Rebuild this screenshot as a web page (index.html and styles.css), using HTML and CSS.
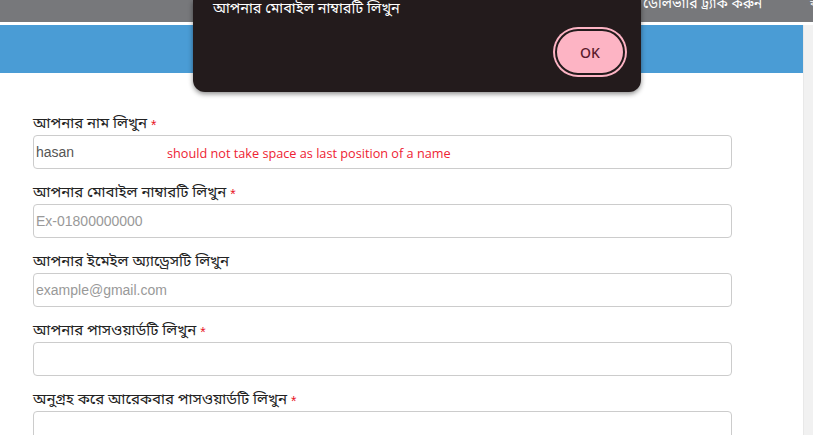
FILE: index.html
```html
<!DOCTYPE html>
<html lang="bn">
<head>
<meta charset="utf-8">
<link rel="stylesheet" href="styles.css">
</head>
<body>
<header class="topbar">
  <span class="nav-link">ডেলিভারি ট্র্যাক করুন</span>
  <span class="nav-link nav-last">ব</span>
</header>
<div class="page">
  <main class="main">
    <div class="banner"></div>
    <form class="form">
      <div class="field">
        <label class="label">আপনার নাম লিখুন <span class="req">*</span></label>
        <div class="input-wrap">
          <input class="input" type="text" value="hasan">
          <span class="error">should not take space as last position of a name</span>
        </div>
      </div>
      <div class="field">
        <label class="label">আপনার মোবাইল নাম্বারটি লিখুন <span class="req">*</span></label>
        <input class="input" type="text" placeholder="Ex-01800000000">
      </div>
      <div class="field">
        <label class="label">আপনার ইমেইল অ্যাড্রেসটি লিখুন</label>
        <input class="input" type="text" placeholder="example@gmail.com">
      </div>
      <div class="field">
        <label class="label">আপনার পাসওয়ার্ডটি লিখুন <span class="req">*</span></label>
        <input class="input" type="password">
      </div>
      <div class="field">
        <label class="label">অনুগ্রহ করে আরেকবার পাসওয়ার্ডটি লিখুন <span class="req">*</span></label>
        <input class="input" type="password">
      </div>
    </form>
  </main>
  <div class="scrollbar"></div>
</div>
<div class="dialog">
  <p class="dialog-text">আপনার মোবাইল নাম্বারটি লিখুন</p>
  <div class="dialog-actions">
    <button class="ok-btn" type="button">OK</button>
  </div>
</div>
</body>
</html>
```

FILE: styles.css
```css
* { box-sizing: border-box; }
html, body { margin: 0; padding: 0; }
body {
  width: 813px;
  height: 435px;
  overflow: hidden;
  background: #fff;
  font-family: "Noto Sans Bengali", "Lohit Bengali", "Noto Serif Bengali", "FreeSerif", "Noto Sans", sans-serif;
}
.topbar {
  height: 22px;
  background: #77787b;
  display: flex;
  align-items: flex-start;
  padding-left: 643px;
  border-bottom: 3px solid #fff;
  box-sizing: content-box;
  overflow: hidden;
}
.nav-link {
  color: #fff;
  font-size: 14px;
  line-height: 14px;
  margin-top: -2px;
  white-space: nowrap;
}
.nav-last { margin-left: 48px; font-size: 10px; }
.page {
  display: flex;
  height: 410px;
  overflow: hidden;
}
.main {
  flex: 1;
  background: #fff;
}
.scrollbar {
  width: 10px;
  background: #f1f1f1;
  border-left: 1px solid #e8e8e8;
}
.banner {
  height: 48px;
  background: #4a9cd5;
}
.form {
  padding: 27px 0 0 33px;
  width: 732px;
}
.field {
  display: flex;
  flex-direction: column;
}
.label {
  font-size: 15px;
  line-height: 17px;
  color: #222;
  height: 35px;
  padding-bottom: 2px;
  display: flex;
  align-items: flex-end;
  gap: 4px;
}
.req { color: #e8131f; font-family: "Liberation Sans", sans-serif; font-size: 14px; line-height: 15px; }
.input-wrap { position: relative; }
.input {
  width: 699px;
  height: 34px;
  border: 1px solid #ccc;
  border-radius: 4px;
  padding: 0 2px;
  font-family: "Liberation Sans", Arial, sans-serif;
  font-size: 14px;
  color: #555;
  background: #fff;
  display: block;
}
.input::placeholder { color: #999; }
.error {
  position: absolute;
  left: 134px;
  top: 10px;
  font-family: "Open Sans", sans-serif;
  font-size: 12.7px;
  line-height: 16px;
  color: #ee2233;
  white-space: nowrap;
}
.dialog {
  position: absolute;
  left: 193px;
  top: 0;
  width: 448px;
  height: 92px;
  background: #231b1c;
  border-radius: 0 0 12px 12px;
  box-shadow: 0 2px 5px rgba(0,0,0,0.45);
  padding: 0 16px 17px 20px;
  display: flex;
  flex-direction: column;
  justify-content: space-between;
}
.dialog-text {
  margin: 1px 0 0 0;
  color: #fff;
  font-size: 14.5px;
  line-height: 18px;
}
.dialog-actions {
  display: flex;
  justify-content: flex-end;
}
.ok-btn {
  width: 70px;
  height: 46px;
  border-radius: 23px;
  background: #fdb4c4;
  border: 2px solid #231b1c;
  box-shadow: 0 0 0 2px #fdb4c4;
  color: #5b1a2c;
  font-family: "Noto Sans", "Open Sans", sans-serif;
  font-size: 14px;
  font-weight: 500;
  padding: 0;
}
```
